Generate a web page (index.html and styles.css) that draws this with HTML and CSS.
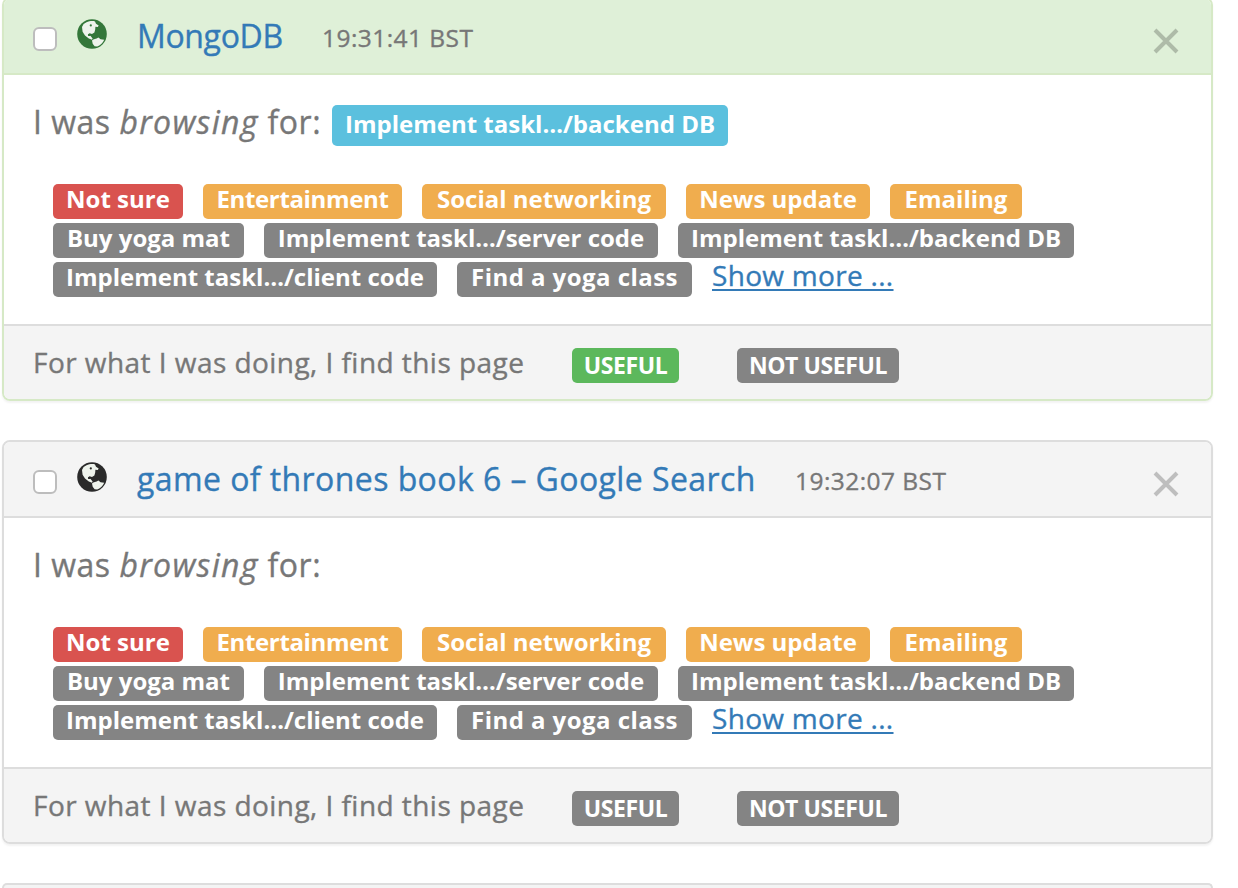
FILE: index.html
```
<!DOCTYPE html>
<html lang="en">
<head>
<meta charset="utf-8">
<title>Activity</title>
<link rel="stylesheet" href="styles.css">
</head>
<body>
<svg class="defs" width="0" height="0" aria-hidden="true">
  <symbol id="globe" viewBox="0 0 30 30">
    <circle cx="15" cy="15" r="14.8" fill="currentColor"/>
    <path class="land" d="M9.5 3.3C12 2 16 1.7 18 2.4L19 4.8L21.7 6.6L20.8 8L18.4 7.8L18.2 10.6L17.4 13.4L15 15L12.6 14.2L11.2 15.6L13.6 17L15.6 19.6L15 20.8L11.8 19.6L8 16.4L5.6 12.8L5 8L6.6 5Z"/>
    <path class="land" d="M15 21.6C16.6 20 19 20.2 21.4 18.6L23.6 20.2L27.2 20.8C26 24 23 26.8 20.2 27.6L17.6 27.2L15.7 24.7Z"/>
    <circle cx="13.8" cy="6.4" r="1.1" fill="currentColor"/>
    <circle cx="12.1" cy="15.9" r="1.2" fill="currentColor"/>
  </symbol>
</svg>
<main class="list">
  <article class="card card-done">
    <header class="head">
      <span class="check"></span>
      <svg class="globe"><use href="#globe"/></svg>
      <a class="title title-a">MongoDB</a>
      <time class="time">19:31:41 BST</time>
      <svg class="close" viewBox="0 0 26 26"><path d="M2 2L24 24M24 2L2 24"/></svg>
    </header>
    <section class="body">
      <div class="doing"><p class="lead">I was <em>browsing</em> for:</p><span class="chosen">Implement taskl…/backend DB</span></div>
      <div class="tags">
        <div class="row"><span class="tag red w1">Not sure</span><span class="tag amber w2">Entertainment</span><span class="tag amber w3">Social networking</span><span class="tag amber w4">News update</span><span class="tag amber w5">Emailing</span></div>
        <div class="row"><span class="tag w6">Buy yoga mat</span><span class="tag w7">Implement taskl…/server code</span><span class="tag w8">Implement taskl…/backend DB</span></div>
        <div class="row"><span class="tag w9">Implement taskl…/client code</span><span class="tag w10">Find a yoga class</span><a class="more">Show more ...</a></div>
      </div>
    </section>
    <footer class="foot"><p class="ask">For what I was doing, I find this page</p><span class="vote yes on">USEFUL</span><span class="vote no">NOT USEFUL</span></footer>
  </article>
  <article class="card">
    <header class="head">
      <span class="check"></span>
      <svg class="globe"><use href="#globe"/></svg>
      <a class="title title-b">game of thrones book 6 – Google Search</a>
      <time class="time">19:32:07 BST</time>
      <svg class="close" viewBox="0 0 26 26"><path d="M2 2L24 24M24 2L2 24"/></svg>
    </header>
    <section class="body">
      <div class="doing"><p class="lead">I was <em>browsing</em> for:</p></div>
      <div class="tags">
        <div class="row"><span class="tag red w1">Not sure</span><span class="tag amber w2">Entertainment</span><span class="tag amber w3">Social networking</span><span class="tag amber w4">News update</span><span class="tag amber w5">Emailing</span></div>
        <div class="row"><span class="tag w6">Buy yoga mat</span><span class="tag w7">Implement taskl…/server code</span><span class="tag w8">Implement taskl…/backend DB</span></div>
        <div class="row"><span class="tag w9">Implement taskl…/client code</span><span class="tag w10">Find a yoga class</span><a class="more">Show more ...</a></div>
      </div>
    </section>
    <footer class="foot"><p class="ask">For what I was doing, I find this page</p><span class="vote yes">USEFUL</span><span class="vote no">NOT USEFUL</span></footer>
  </article>
  <article class="card card-next"></article>
</main>
</body>
</html>
```
FILE: styles.css
```
* { box-sizing: border-box; }
html, body { margin: 0; height: 888px; overflow: hidden; background: #fff; }
body { font-family: "Open Sans", "Noto Sans", sans-serif; color: #777; }
p { margin: 0; }
.defs { display: block; height: 0; }
.list { display: flex; flex-direction: column; gap: 39px; margin-top: -3px; padding: 0 25px 0 2px; }
.card { height: 404px; flex: none; --bar: #f4f4f4; --line: #ddd; border: 2px solid var(--line); border-radius: 8px; overflow: hidden; box-shadow: 0 2px 2px rgba(0,0,0,.05); display: flex; flex-direction: column; color: #2a2a2a; }
.card-done { --bar: #dff0d8; --line: #d6e9c6; color: #34773a; }
.card-next { height: 5px; border-bottom: 0; border-radius: 8px 8px 0 0; background: var(--bar); box-shadow: none; }
.head { height: 76px; flex: none; background: var(--bar); border-bottom: 2px solid var(--line); display: flex; align-items: flex-start; padding: 0 31px 0 29px; }
.check { width: 24px; height: 24px; margin-top: 28px; background: #fff; border: 2px solid #bdbdbd; border-radius: 6px; }
.globe { width: 30px; height: 30px; margin: 20px 0 0 20px; }
.land { fill: #eef3ec; }
.title { margin: 14px 0 0 30px; font-size: 32px; line-height: 46px; color: #337ab7; white-space: nowrap; }
.title, .time, .lead, .ask, .more { -webkit-text-stroke: .35px currentColor; }
.title-a { width: 145px; letter-spacing: -.35px; }
.title-b { width: 618px; letter-spacing: .42px; }
.time { margin: 19px 0 0 40px; font-size: 24.5px; line-height: 40px; letter-spacing: .45px; color: #777; white-space: nowrap; }
.close { width: 26px; height: 26px; margin: 29px 1px 0 auto; fill: none; stroke: #000; stroke-opacity: .22; stroke-width: 4; }
.body { flex: 1; padding: 30px 28px 0 29px; color: #777; }
.doing { height: 40px; display: flex; }
.lead { width: 299px; font-size: 32px; line-height: 34px; letter-spacing: .5px; white-space: nowrap; }
.lead em { letter-spacing: 1.3px; }
.chosen { width: 396px; height: 41px; background: #5bc0de; border-radius: 5px; color: #fff; font-weight: 700; font-size: 24px; line-height: 38px; text-align: center; white-space: nowrap; }
.tags { margin: 39px 0 0 20px; display: flex; flex-direction: column; gap: 4px; }
.row { display: flex; gap: 20px; }
.tag { height: 35px; background: #848484; border-radius: 5px; color: #fff; font-weight: 700; font-size: 24px; line-height: 29px; text-align: center; white-space: nowrap; }
.red { background: #d9534f; }
.amber { background: #f0ad4e; }
.w1 { width: 130px; } .w2 { width: 199px; letter-spacing: -.35px; } .w3 { width: 244px; } .w4 { width: 184px; } .w5 { width: 132px; }
.w6 { width: 191px; } .w7 { width: 394px; } .w8 { width: 396px; } .w9 { width: 384px; } .w10 { width: 235px; letter-spacing: .45px; }
.more { height: 29px; font-size: 28px; line-height: 26px; letter-spacing: .3px; color: #337ab7; text-decoration: underline; text-decoration-thickness: 2px; text-underline-offset: 3px; white-space: nowrap; }
.foot { height: 75px; background: #f4f4f4; border-top: 2px solid #ddd; display: flex; padding: 0 28px 0 29px; color: #777; }
.ask { width: 539px; margin-top: 18px; font-size: 28px; line-height: 36px; letter-spacing: .45px; white-space: nowrap; }
.vote { height: 35px; margin-top: 22px; background: #848484; border-radius: 5px; color: #fff; font-weight: 700; font-size: 23px; line-height: 34px; letter-spacing: -.4px; text-align: center; white-space: nowrap; }
.on { background: #5cb85c; }
.yes { width: 107px; }
.no { width: 162px; margin-left: 58px; }
```
